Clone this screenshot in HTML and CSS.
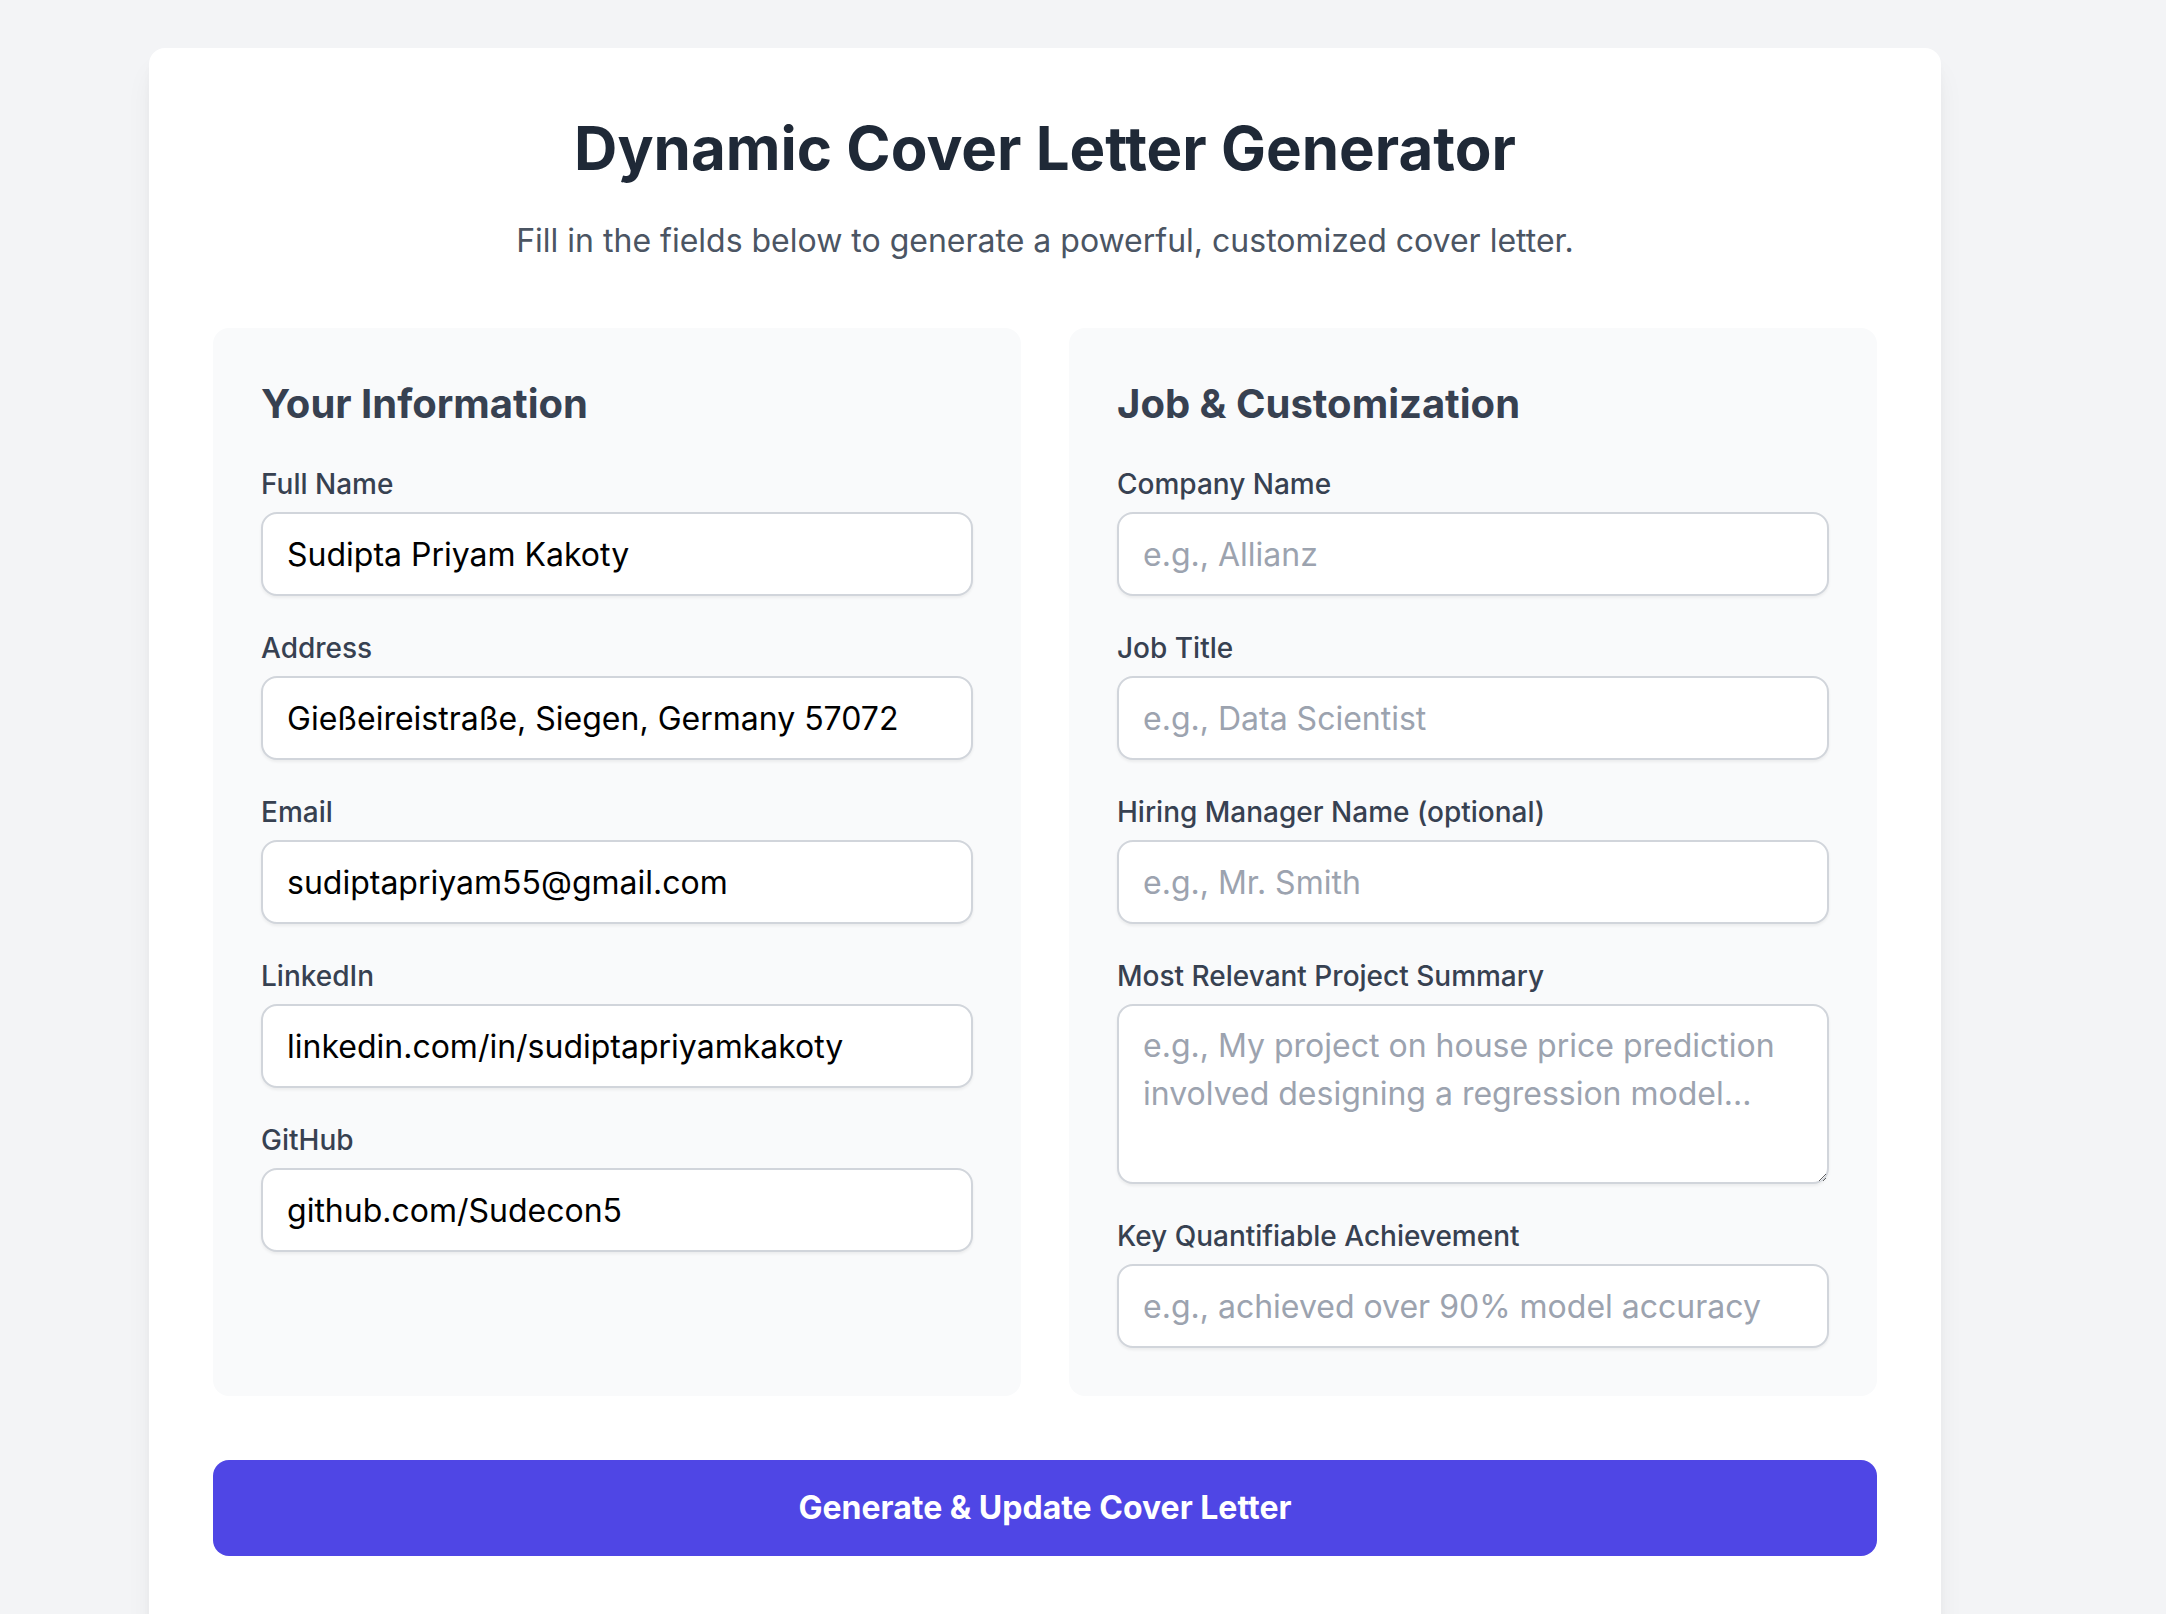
FILE: index.html
```html
<!DOCTYPE html>
<html lang="en">
<head>
<meta charset="utf-8">
<title>Dynamic Cover Letter Generator</title>
<link rel="stylesheet" href="styles.css">
</head>
<body>
<div class="page">
  <main class="card">
    <h1 class="title">Dynamic Cover Letter Generator</h1>
    <p class="subtitle">Fill in the fields below to generate a powerful, customized cover letter.</p>

    <div class="columns">
      <section class="panel">
        <h2 class="panel-title">Your Information</h2>
        <div class="fields">
          <div class="field">
            <label class="label" for="name">Full Name</label>
            <input class="input" id="name" type="text" value="Sudipta Priyam Kakoty">
          </div>
          <div class="field">
            <label class="label" for="address">Address</label>
            <input class="input" id="address" type="text" value="Gießeireistraße, Siegen, Germany 57072">
          </div>
          <div class="field">
            <label class="label" for="email">Email</label>
            <input class="input" id="email" type="text" value="sudiptapriyam55@gmail.com">
          </div>
          <div class="field">
            <label class="label" for="linkedin">LinkedIn</label>
            <input class="input" id="linkedin" type="text" value="linkedin.com/in/sudiptapriyamkakoty">
          </div>
          <div class="field">
            <label class="label" for="github">GitHub</label>
            <input class="input" id="github" type="text" value="github.com/Sudecon5">
          </div>
        </div>
      </section>

      <section class="panel">
        <h2 class="panel-title">Job &amp; Customization</h2>
        <div class="fields">
          <div class="field">
            <label class="label" for="company">Company Name</label>
            <input class="input" id="company" type="text" placeholder="e.g., Allianz">
          </div>
          <div class="field">
            <label class="label" for="job">Job Title</label>
            <input class="input" id="job" type="text" placeholder="e.g., Data Scientist">
          </div>
          <div class="field">
            <label class="label" for="manager">Hiring Manager Name (optional)</label>
            <input class="input" id="manager" type="text" placeholder="e.g., Mr. Smith">
          </div>
          <div class="field">
            <label class="label" for="project">Most Relevant Project Summary</label>
            <textarea class="input textarea" id="project" rows="3" placeholder="e.g., My project on house price prediction involved designing a regression model..."></textarea>
          </div>
          <div class="field">
            <label class="label" for="achievement">Key Quantifiable Achievement</label>
            <input class="input" id="achievement" type="text" placeholder="e.g., achieved over 90% model accuracy">
          </div>
        </div>
      </section>
    </div>

    <button class="generate" type="button">Generate &amp; Update Cover Letter</button>
  </main>
</div>
</body>
</html>
```

FILE: styles.css
```css
* {
  box-sizing: border-box;
}

html {
  overflow: hidden;
}

body {
  margin: 0;
  background: #f3f4f6;
  font-family: Inter, "Noto Sans", sans-serif;
  color: #1f2937;
}

.page {
  padding: 48px 0 48px 149px;
}

.card {
  width: 1792px;
  background: #ffffff;
  border-radius: 16px;
  padding: 64px 64px 128px;
  box-shadow: 0 20px 30px -6px rgba(0, 0, 0, 0.08), 0 8px 12px -4px rgba(0, 0, 0, 0.05);
}

.title {
  margin: 0;
  text-align: center;
  font-size: 60px;
  line-height: 72px;
  font-weight: 700;
  color: #1f2937;
}

.subtitle {
  margin: 33px 0 63px;
  text-align: center;
  font-size: 32px;
  line-height: 48px;
  color: #4b5563;
}

.columns {
  display: grid;
  grid-template-columns: 1fr 1fr;
  gap: 48px;
}

.panel {
  background: #f9fafb;
  border-radius: 16px;
  padding: 48px;
}

.panel-title {
  margin: 0 0 32px;
  font-size: 40px;
  line-height: 56px;
  font-weight: 650;
  color: #374151;
}

.fields {
  display: flex;
  flex-direction: column;
  gap: 32px;
}

.field {
  display: flex;
  flex-direction: column;
}

.label {
  font-size: 28px;
  line-height: 40px;
  font-weight: 500;
  color: #374151;
  margin-bottom: 8px;
}

.input {
  display: block;
  width: 100%;
  height: 84px;
  padding: 16px 24px;
  border: 2px solid #d1d5db;
  border-radius: 16px;
  background: #ffffff;
  font-family: Inter, "Noto Sans", sans-serif;
  font-size: 32px;
  line-height: 48px;
  color: #000000;
  box-shadow: 0 2px 3px rgba(0, 0, 0, 0.06);
  outline: none;
}

.input::placeholder {
  color: #9ca3af;
  opacity: 1;
}

.textarea {
  height: 180px;
  resize: vertical;
}

.generate {
  display: block;
  width: 100%;
  margin-top: 64px;
  padding: 24px;
  border: none;
  border-radius: 16px;
  background: #4f46e5;
  color: #ffffff;
  font-family: Inter, "Noto Sans", sans-serif;
  font-size: 32px;
  line-height: 48px;
  font-weight: 700;
  cursor: pointer;
}
```
